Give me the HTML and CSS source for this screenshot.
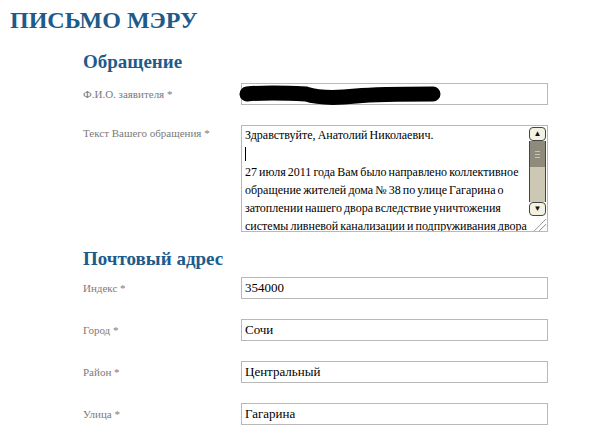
FILE: index.html
```
<!DOCTYPE html>
<html lang="ru">
<head>
    <meta charset="UTF-8">
    <title>Письмо мэру</title>
    <link rel="stylesheet" href="styles.css">
</head>
<body>
    <h1>ПИСЬМО МЭРУ</h1>

    <!-- Обращение -->
    <div class="section">
        <h2>Обращение</h2>
        <div class="row">
            <label for="fio">Ф.И.О. заявителя *</label>
            <div class="field">
                <input type="text" id="fio" value="">
                <svg class="blot" width="204" height="22" viewBox="0 0 204 22">
                    <path d="M9 10 C30 8 50 9 68 10 C80 14 100 14 118 12 C140 10 170 10 195 10" stroke="#000" stroke-width="15" stroke-linecap="round" fill="none"/>
                </svg>
            </div>
        </div>
        <div class="row top">
            <label for="text">Текст Вашего обращения *</label>
            <div class="textbox">
                <textarea id="text">Здравствуйте, Анатолий Николаевич.

27 июля 2011 года Вам было направлено коллективное обращение жителей дома № 38 по улице Гагарина о затоплении нашего двора вследствие уничтожения системы ливневой канализации и подпруживания двора дождевыми водами.</textarea>
                <span class="caret"></span>
                <div class="scroll">
                    <div class="sbtn">&#9650;</div>
                    <div class="thumb"><span></span><span></span><span></span></div>
                    <div class="track"></div>
                    <div class="sbtn">&#9660;</div>
                    <div class="grip"></div>
                </div>
            </div>
        </div>
    </div>

    <!-- Почтовый адрес -->
    <div class="section">
        <h2 class="second">Почтовый адрес</h2>
        <div class="row">
            <label for="index">Индекс *</label>
            <input type="text" id="index" value="354000">
        </div>
        <div class="row">
            <label for="city">Город *</label>
            <input type="text" id="city" value="Сочи">
        </div>
        <div class="row">
            <label for="area">Район *</label>
            <input type="text" id="area" value="Центральный">
        </div>
        <div class="row">
            <label for="street">Улица *</label>
            <input type="text" id="street" value="Гагарина">
        </div>
    </div>
</body>
</html>
```

FILE: styles.css
```
body {
    margin: 0;
    padding: 6px 10px;
    font-family: "Liberation Serif", serif;
    background: #fff;
}
h1 {
    margin: 0;
    font-size: 24px;
    line-height: 28px;
    color: #1d5b8a;
}
h2 {
    margin: 16px 0 9px;
    font-size: 19px;
    line-height: 24px;
    color: #1d5b8a;
}
h2.second {
    margin-top: 15px;
    margin-bottom: 6px;
}
.section {
    margin-left: 73px;
}
.row {
    display: grid;
    grid-template-columns: 158px 307px;
    align-items: center;
    margin-bottom: 20px;
}
.row.top {
    align-items: start;
    margin-bottom: 0;
}
.row.top label {
    padding-top: 2px;
}
label {
    font-size: 11px;
    color: #7a7a7a;
}
input[type="text"] {
    width: 100%;
    height: 22px;
    box-sizing: border-box;
    border: 1px solid #b8b8b8;
    padding: 0 3px;
    font-family: "Liberation Serif", serif;
    font-size: 13px;
    color: #000;
    outline: none;
}
.field {
    position: relative;
}
.blot {
    position: absolute;
    left: -3px;
    top: 1px;
}
.textbox {
    position: relative;
    display: flex;
    height: 107px;
    box-sizing: border-box;
    border: 1px solid #b8b8b8;
}
textarea {
    flex: 1;
    border: none;
    resize: none;
    overflow: hidden;
    padding: 0 0 0 3px;
    margin: 0;
    font-family: "Liberation Serif", serif;
    font-size: 12px;
    line-height: 18.3px;
    word-spacing: -0.9px;
    color: #000;
    outline: none;
}
.caret {
    position: absolute;
    left: 3px;
    top: 21px;
    width: 1px;
    height: 14px;
    background: #000;
}
.scroll {
    width: 17px;
    display: flex;
    flex-direction: column;
    padding: 1px 1px 0 0;
}
.sbtn {
    height: 14px;
    box-sizing: border-box;
    border: 1px solid #444;
    border-radius: 4px;
    background: #f5f1e2;
    font-size: 8px;
    line-height: 12px;
    text-align: center;
    color: #111;
}
.thumb {
    height: 26px;
    background: #8e8b7c;
    border-left: 1px solid #444;
    border-right: 1px solid #444;
    display: flex;
    flex-direction: column;
    justify-content: center;
    align-items: center;
    gap: 2px;
}
.thumb span {
    width: 5px;
    height: 1px;
    background: #c9c5b4;
}
.track {
    flex: 1;
    background: #ccc8b4;
    border-left: 1px solid #444;
    border-right: 1px solid #444;
}
.grip {
    height: 15px;
    background: linear-gradient(135deg, transparent 60%, #999 62%, transparent 66%, transparent 76%, #999 78%, transparent 82%);
}
```
